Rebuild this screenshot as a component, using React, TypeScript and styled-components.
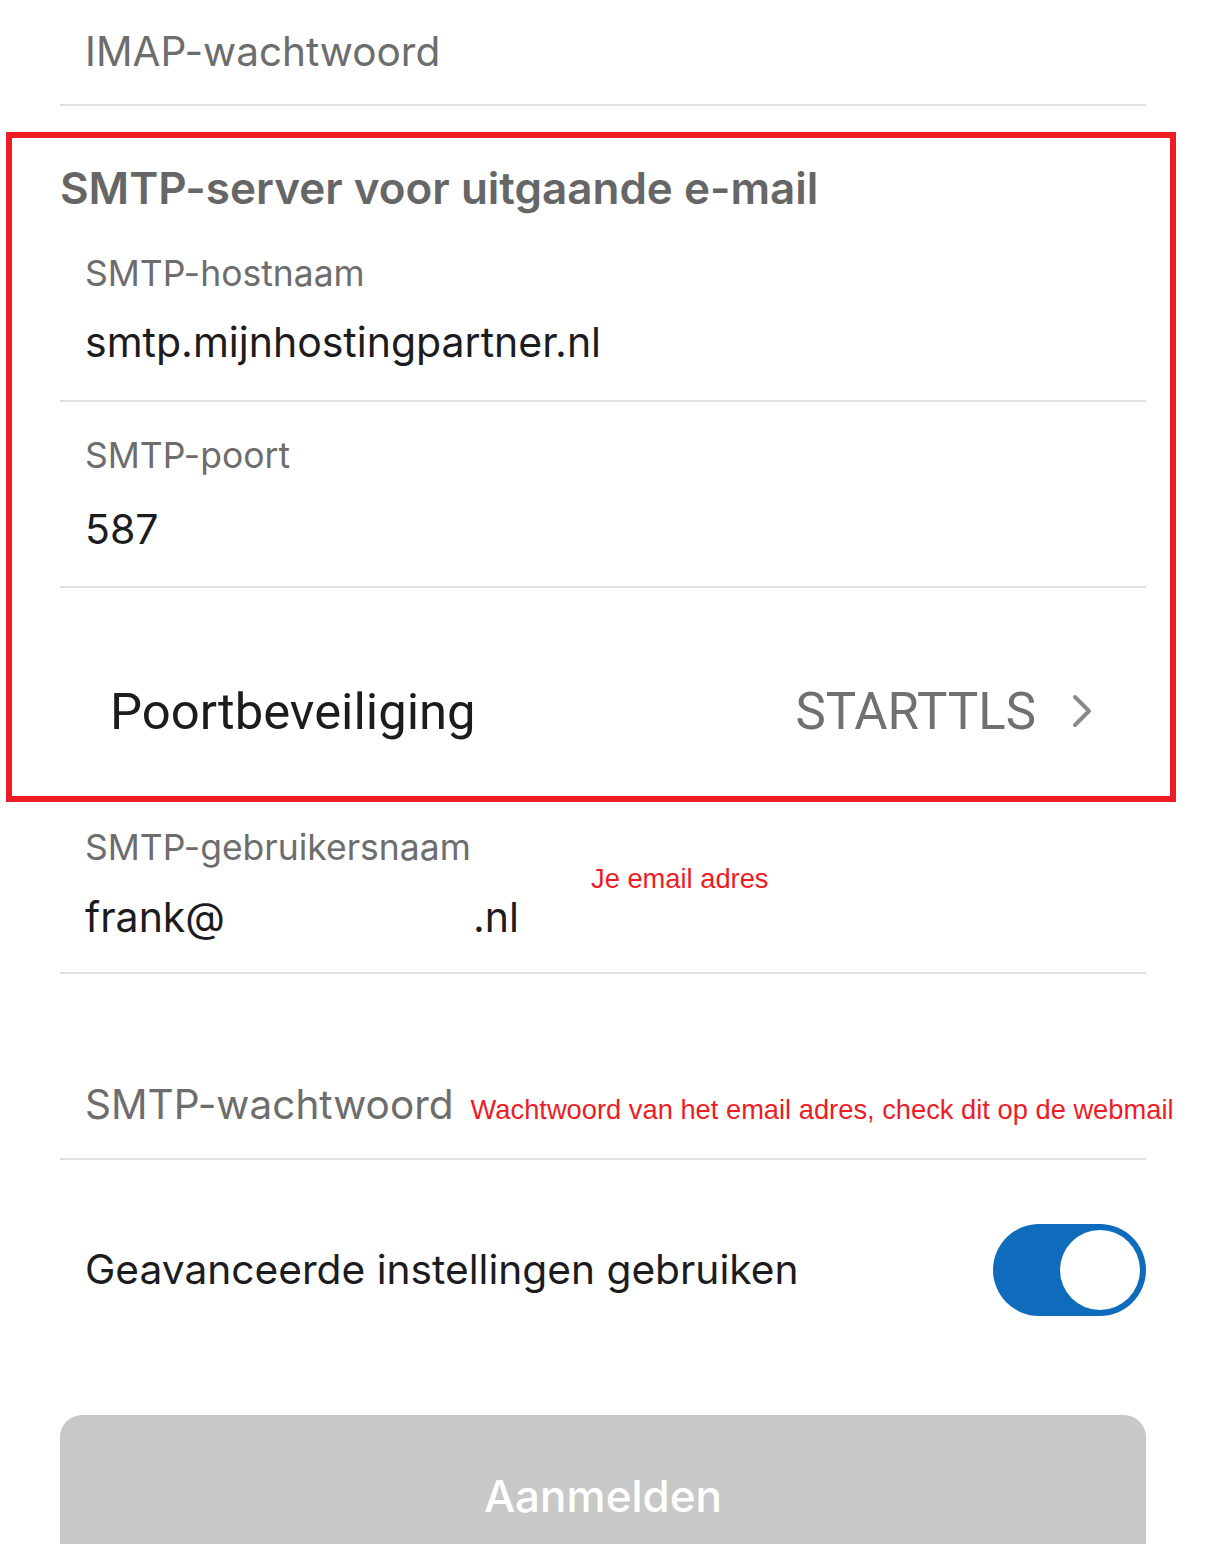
import styled, { createGlobalStyle } from 'styled-components';

const GlobalStyle = createGlobalStyle`
  html, body {
    margin: 0;
    padding: 0;
    background: #ffffff;
  }
  body {
    font-family: Inter, "Noto Sans", sans-serif;
    -webkit-font-smoothing: antialiased;
  }
`;

const Page = styled.div`
  display: flex;
  flex-direction: column;
  width: 1206px;
`;

const Section = styled.div`
  margin: 0 60px;
`;

const Field = styled.div<{ $top?: number; $gap?: number; $bottom?: number }>`
  position: relative;
  display: flex;
  flex-direction: column;
  gap: ${(p) => p.$gap ?? 24}px;
  padding: ${(p) => p.$top ?? 38}px 0 ${(p) => p.$bottom ?? 34}px 25px;
  border-bottom: 2px solid #e1e1e1;
`;

const Label = styled.div`
  font-size: 35.5px;
  line-height: 40px;
  color: #6d6d6d;
  white-space: nowrap;
`;

const Value = styled.div`
  font-size: 41px;
  line-height: 48px;
  color: #1c1c1e;
  white-space: nowrap;
`;

const Placeholder = styled.div`
  display: flex;
  align-items: baseline;
  gap: 17px;
  font-size: 40.5px;
  line-height: 48px;
  color: #6d6d6d;
  white-space: nowrap;
`;

const Redacted = styled.span`
  display: inline-block;
  width: 248px;
`;

const Note = styled.span`
  font-family: "Liberation Sans", Arial, sans-serif;
  font-size: 27.3px;
  line-height: 32px;
  color: #ee1c25;
  white-space: nowrap;
`;

const FloatingNote = styled(Note)`
  position: absolute;
  left: 531px;
  top: 61px;
`;

const Highlight = styled.div`
  margin: 26px 30px 0 6px;
  padding: 22px 24px 0 48px;
  border: 6px solid #ee1c25;
`;

const Heading = styled.h2`
  margin: 0;
  font-size: 44px;
  line-height: 56px;
  font-weight: 600;
  color: #666666;
  white-space: nowrap;
`;

const SelectRow = styled.div`
  display: flex;
  align-items: center;
  justify-content: space-between;
  height: 60px;
  padding: 93px 54px 55px 50px;
  font-family: Roboto, "Liberation Sans", sans-serif;
  font-size: 51px;
`;

const SelectLabel = styled.span`
  font-size: 50.8px;
  color: #1c1c1e;
`;

const SelectValue = styled.span`
  display: flex;
  align-items: center;
  gap: 36px;
  color: #707070;
`;

const ToggleRow = styled.div`
  display: flex;
  align-items: center;
  justify-content: space-between;
  padding: 64px 0 0 25px;
  font-size: 40.7px;
  line-height: 48px;
  color: #1c1c1e;
`;

const Switch = styled.div<{ $on: boolean }>`
  position: relative;
  width: 153px;
  height: 92px;
  border-radius: 46px;
  background: ${(p) => (p.$on ? '#0f6cbd' : '#e5e5ea')};
  flex-shrink: 0;
`;

const Knob = styled.div<{ $on: boolean }>`
  position: absolute;
  top: 6px;
  ${(p) => (p.$on ? 'right: 6px;' : 'left: 6px;')}
  width: 80px;
  height: 80px;
  border-radius: 50%;
  background: #ffffff;
`;

const SignInButton = styled.button`
  margin: 99px 60px 0;
  padding: 53px 0 57px;
  border: 0;
  border-radius: 22px;
  background: #c8c8c8;
  color: #ffffff;
  font-family: Inter, "Noto Sans", sans-serif;
  font-size: 44px;
  line-height: 56px;
  font-weight: 500;
`;

const Chevron = () => (
  <svg width="20" height="34" viewBox="0 0 20 34" fill="none">
    <path
      d="M3 3 L17 17 L3 31"
      stroke="#8a8a8a"
      strokeWidth="4"
      strokeLinecap="round"
      strokeLinejoin="round"
    />
  </svg>
);

export default function App() {
  return (
    <Page>
      <GlobalStyle />
      <Section>
        <Field $top={28} $bottom={28}>
          <Placeholder>IMAP-wachtwoord</Placeholder>
        </Field>
      </Section>

      <Highlight>
        <Heading>SMTP-server voor uitgaande e-mail</Heading>
        <Field>
          <Label>SMTP-hostnaam</Label>
          <Value>smtp.mijnhostingpartner.nl</Value>
        </Field>
        <Field $top={34} $gap={29} $bottom={33}>
          <Label>SMTP-poort</Label>
          <Value>587</Value>
        </Field>
        <SelectRow>
          <SelectLabel>Poortbeveiliging</SelectLabel>
          <SelectValue>
            STARTTLS
            <Chevron />
          </SelectValue>
        </SelectRow>
      </Highlight>

      <Section>
        <Field $top={26} $gap={25} $bottom={31}>
          <Label>SMTP-gebruikersnaam</Label>
          <Value>
            frank@<Redacted />.nl
          </Value>
          <FloatingNote>Je email adres</FloatingNote>
        </Field>
        <Field $top={107} $bottom={29}>
          <Placeholder>
            SMTP-wachtwoord
            <Note>Wachtwoord van het email adres, check dit op de webmail</Note>
          </Placeholder>
        </Field>
        <ToggleRow>
          Geavanceerde instellingen gebruiken
          <Switch $on>
            <Knob $on />
          </Switch>
        </ToggleRow>
      </Section>

      <SignInButton>Aanmelden</SignInButton>
    </Page>
  );
}
